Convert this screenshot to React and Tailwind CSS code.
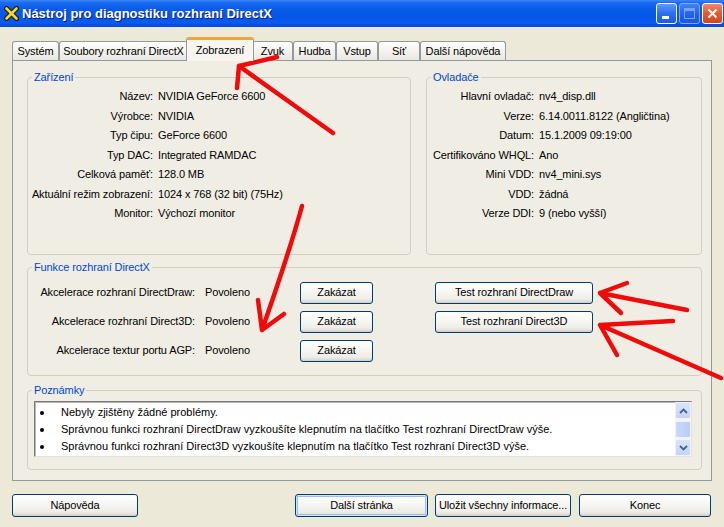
import React from "react";

function Btn({ className = "", children, def = false }) {
  return (
    <div
      className={`flex items-center justify-center rounded-[3px] border border-[#003C74] bg-[linear-gradient(180deg,#FFFFFF_0%,#F7F7F4_40%,#EEEDE8_80%,#D8D3C8_100%)] text-[11px] leading-none text-black ${
        def ? "shadow-[inset_0_0_0_1px_#CEE7FF,inset_0_0_0_2px_#9CBDED]" : "shadow-[inset_0_-1px_0_#D6D0C5]"
      } ${className}`}
    >
      {children}
    </div>
  );
}

function Group({ title, className = "", children }) {
  return (
    <fieldset className={`m-0 min-w-0 rounded-[4px] border border-[#D0D0BF] p-0 ${className}`}>
      <legend className="ml-[4px] px-[2px] text-[11px] leading-[13px] text-[#0046D5]">{title}</legend>
      {children}
    </fieldset>
  );
}

function InfoGrid({ rows, cols }) {
  return (
    <div className={`grid ${cols} gap-x-[5px] pt-[3px] leading-[19.5px]`}>
      {rows.map(([k, v]) => (
        <React.Fragment key={k}>
          <div className="whitespace-nowrap text-right">{k}</div>
          <div className="whitespace-nowrap">{v}</div>
        </React.Fragment>
      ))}
    </div>
  );
}

function Tab({ w, children, active = false }) {
  if (active) {
    return (
      <div
        className={`relative z-10 -mx-[2px] -mb-[1px] flex h-[24px] items-start justify-center rounded-t-[3px] border-x border-t-[3px] border-x-[#919B9C] border-t-[#F1A534] bg-[#F6F5F0] pt-[2px] ${w}`}
      >
        {children}
      </div>
    );
  }
  return (
    <div
      className={`flex h-[19px] items-center justify-center whitespace-nowrap rounded-t-[3px] border-x border-t border-[#919B9C] bg-[linear-gradient(180deg,#FFFFFF_0%,#F4F3EF_50%,#E8E7E0_100%)] ${w}`}
    >
      {children}
    </div>
  );
}

function Chevron({ up }) {
  return (
    <svg width="9" height="6" viewBox="0 0 9 6">
      <path
        d={up ? "M1 5 L4.5 1.5 L8 5" : "M1 1 L4.5 4.5 L8 1"}
        fill="none"
        stroke="#4D6185"
        strokeWidth="1.8"
      />
    </svg>
  );
}

export default function App() {
  const dev = [
    ["Název:", "NVIDIA GeForce 6600"],
    ["Výrobce:", "NVIDIA"],
    ["Typ čipu:", "GeForce 6600"],
    ["Typ DAC:", "Integrated RAMDAC"],
    ["Celková paměť:", "128.0 MB"],
    ["Aktuální režim zobrazení:", "1024 x 768 (32 bit) (75Hz)"],
    ["Monitor:", "Výchozí monitor"],
  ];
  const drv = [
    ["Hlavní ovladač:", "nv4_disp.dll"],
    ["Verze:", "6.14.0011.8122 (Angličtina)"],
    ["Datum:", "15.1.2009 09:19:00"],
    ["Certifikováno WHQL:", "Ano"],
    ["Mini VDD:", "nv4_mini.sys"],
    ["VDD:", "žádná"],
    ["Verze DDI:", "9 (nebo vyšší)"],
  ];
  const feats = [
    ["Akcelerace rozhraní DirectDraw:", "Test rozhraní DirectDraw"],
    ["Akcelerace rozhraní Direct3D:", "Test rozhraní Direct3D"],
    ["Akcelerace textur portu AGP:", null],
  ];
  const notes = [
    "Nebyly zjištěny žádné problémy.",
    "Správnou funkci rozhraní DirectDraw vyzkoušíte klepnutím na tlačítko Test rozhraní DirectDraw výše.",
    "Správnou funkci rozhraní Direct3D vyzkoušíte klepnutím na tlačítko Test rozhraní Direct3D výše.",
  ];

  return (
    <div className="relative flex h-[527px] w-[724px] flex-col overflow-hidden bg-[#ECE9D8] font-['Liberation_Sans',Arial,sans-serif] text-[11px] tracking-[-0.12px] text-black">
      {/* Title bar */}
      <div className="flex h-[27px] shrink-0 items-center bg-[linear-gradient(180deg,#3A87F5_0%,#1C6AF2_10%,#0A5DEB_30%,#0556E6_60%,#0A5BEE_85%,#0648D6_100%)]">
        <svg className="ml-[4px]" width="15" height="15" viewBox="0 0 15 15">
          <path d="M2.5 2.5 L12.5 12.5 M12.5 2.5 L2.5 12.5" stroke="#1B1B1B" strokeWidth="5" strokeLinecap="round" />
          <path d="M2.5 2.5 L12.5 12.5 M12.5 2.5 L2.5 12.5" stroke="#F6D82E" strokeWidth="2.6" strokeLinecap="round" />
        </svg>
        <div className="ml-[3px] text-[13px] font-bold leading-none tracking-normal text-white [text-shadow:1px_1px_0_#0A1E80]">
          Nástroj pro diagnostiku rozhraní DirectX
        </div>
        <div className="ml-auto mr-[1px] flex gap-[2px]">
          <div className="relative h-[21px] w-[21px] rounded-[3px] border border-white bg-[linear-gradient(180deg,#5A9BFD_0%,#2A6FF0_50%,#1C5CE2_100%)]">
            <div className="absolute bottom-[4px] left-[5px] h-[3px] w-[7px] bg-white" />
          </div>
          <div className="relative h-[21px] w-[21px] rounded-[3px] border border-[#7FA8F5] bg-[linear-gradient(180deg,#3E84F6_0%,#2365EA_50%,#1A58DD_100%)]">
            <div className="absolute left-[4px] top-[4px] h-[11px] w-[11px] border border-t-[3px] border-[#7FA2EE]" />
          </div>
          <div className="flex h-[21px] w-[21px] items-center justify-center rounded-[3px] border border-white bg-[linear-gradient(180deg,#F08A6A_0%,#E35A31_50%,#D24619_100%)]">
            <svg width="11" height="11" viewBox="0 0 11 11">
              <path d="M1.5 1.5 L9.5 9.5 M9.5 1.5 L1.5 9.5" stroke="white" strokeWidth="2" />
            </svg>
          </div>
        </div>
      </div>

      {/* Tabs + panel */}
      <div className="pl-[12px] pt-[10px]">
        <div className="flex h-[23px] items-end">
          <Tab w="w-[47px]">Systém</Tab>
          <Tab w="w-[129px]">Soubory rozhraní DirectX</Tab>
          <Tab w="w-[68px]" active>
            Zobrazení
          </Tab>
          <Tab w="w-[41px]">Zvuk</Tab>
          <Tab w="w-[43px]">Hudba</Tab>
          <Tab w="w-[42px]">Vstup</Tab>
          <Tab w="w-[42px]">Síť</Tab>
          <Tab w="w-[86px]">Další nápověda</Tab>
        </div>
        <div className="flex h-[421px] w-[700px] flex-col border border-[#919B9C] bg-[#F0EEE4] pl-[14px] pr-[9px] pt-[10px]">
          <div className="flex h-[184px] gap-[15px]">
            <Group title="Zařízení" className="h-[184px] w-[384px]">
              <InfoGrid rows={dev} cols="grid-cols-[125px_1fr]" />
            </Group>
            <Group title="Ovladače" className="h-[184px] flex-1">
              <InfoGrid rows={drv} cols="grid-cols-[107px_1fr]" />
            </Group>
          </div>

          <Group title="Funkce rozhraní DirectX" className="mt-[6px] h-[115px]">
            <div className="pt-[4px]">
              {feats.map(([label, test]) => (
                <div key={label} className="flex h-[29px] items-center">
                  <div className="w-[167px] whitespace-nowrap text-right">{label}</div>
                  <div className="ml-[10px] w-[95px]">Povoleno</div>
                  <Btn className="h-[22px] w-[73px]">Zakázat</Btn>
                  {test && <Btn className="ml-[62px] h-[22px] w-[158px]">{test}</Btn>}
                </div>
              ))}
            </div>
          </Group>

          <Group title="Poznámky" className="mt-[8px] h-[86px]">
            <div className="ml-[6px] mt-[4px] flex h-[56px] w-[658px] border border-b-[#E4E2DA] border-l-[#7A7A7A] border-r-[#E4E2DA] border-t-[#7A7A7A] bg-white shadow-[inset_1px_1px_0_#B8B6AE]">
              <div className="flex-1 pt-[2px] text-[11px] leading-[17px] tracking-normal">
                {notes.map((n) => (
                  <div key={n} className="flex items-center whitespace-nowrap">
                    <div className="flex w-[26px] shrink-0 pl-[5px]">
                      <div className="h-[4px] w-[4px] rounded-full bg-black" />
                    </div>
                    <div>{n}</div>
                  </div>
                ))}
              </div>
              <div className="flex w-[16px] flex-col bg-[#F6F5F1]">
                <div className="flex h-[17px] items-center justify-center rounded-[2px] border border-[#EEF3FF] bg-[linear-gradient(180deg,#D8E4FD_0%,#C3D4FA_100%)]">
                  <Chevron up />
                </div>
                <div className="mt-[2px] h-[17px] rounded-[2px] border border-[#EEF3FF] bg-[linear-gradient(90deg,#C9D8FB_0%,#BACDF8_100%)]" />
                <div className="flex-1" />
                <div className="flex h-[17px] items-center justify-center rounded-[2px] border border-[#EEF3FF] bg-[linear-gradient(180deg,#D8E4FD_0%,#C3D4FA_100%)]">
                  <Chevron />
                </div>
              </div>
            </div>
          </Group>
        </div>
      </div>

      {/* Bottom buttons */}
      <div className="mt-[13px] flex h-[23px]">
        <Btn className="ml-[12px] w-[126px]">Nápověda</Btn>
        <Btn className="ml-[157px] w-[133px]" def>
          Další stránka
        </Btn>
        <Btn className="ml-[7px] w-[136px]">Uložit všechny informace...</Btn>
        <Btn className="ml-[8px] w-[132px]">Konec</Btn>
      </div>

      {/* Red annotation arrows */}
      <svg
        className="pointer-events-none absolute left-0 top-0"
        width="724"
        height="527"
        viewBox="0 0 724 527"
        fill="none"
        stroke="#F00A0A"
        strokeWidth="4.5"
        strokeLinecap="round"
        strokeLinejoin="round"
      >
        <path d="M333 133 L239 66 M239 66 L237 88 M239 66 L277 57" />
        <path d="M302 206 Q290 250 262 330 M262 330 L258 300 M262 330 L284 314" />
        <path d="M600 293 L687 310 M600 293 L627 283 M600 293 L621 313" />
        <path d="M600 325 L721 378 M600 325 L673 321 M600 325 L617 355" />
      </svg>
    </div>
  );
}
